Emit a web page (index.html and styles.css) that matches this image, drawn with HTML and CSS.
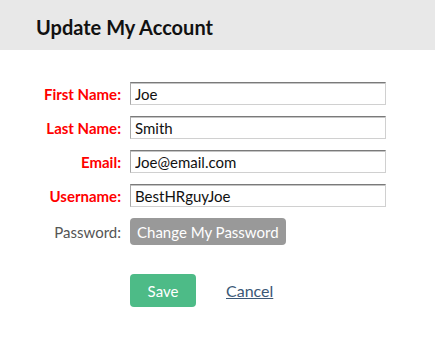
FILE: index.html
```html
<!DOCTYPE html>
<html>
<head>
<meta charset="utf-8">
<link rel="stylesheet" href="styles.css">
</head>
<body>
<header class="header"><h1 class="title">Update My Account</h1></header>
<form class="form">
  <label class="label req">First Name:</label>
  <input class="field" type="text" value="Joe">
  <label class="label req">Last Name:</label>
  <input class="field" type="text" value="Smith">
  <label class="label req">Email:</label>
  <input class="field" type="text" value="Joe@email.com">
  <label class="label req">Username:</label>
  <input class="field" type="text" value="BestHRguyJoe">
  <label class="label plain">Password:</label>
  <div class="cell"><button type="button" class="btn-gray">Change My Password</button></div>
</form>
<div class="actions">
  <button type="button" class="btn-save">Save</button>
  <a class="cancel" href="#">Cancel</a>
</div>
</body>
</html>
```
FILE: styles.css
```css
* { box-sizing: border-box; }
html, body { margin: 0; padding: 0; background: #fff; }
body { font-family: Lato, "Open Sans", sans-serif; color: #111; }
.header {
  height: 50px;
  background: #e8e8e8;
  padding-left: 36px;
  display: flex;
  align-items: center;
}
.title {
  margin: 0;
  font-size: 20px;
  font-weight: 700;
  color: #111;
  padding-top: 4px;
}
.form {
  display: grid;
  grid-template-columns: 121px 256px;
  column-gap: 9px;
  row-gap: 11px;
  padding-top: 32px;
  align-items: center;
}
.label {
  text-align: right;
  font-size: 15px;
  line-height: 18px;
}
.req { color: #ff0000; font-weight: 700; }
.plain { color: #555; font-weight: 400; }
.field {
  width: 256px;
  height: 23px;
  margin: 0;
  padding: 0 4px;
  font-family: Lato, sans-serif;
  font-size: 15px;
  color: #111;
  background: #fff;
  border: 1px solid #d0d0d0;
  border-top-color: #7a7a7a;
  border-left-color: #a8a8a8;
  box-shadow: inset 0 1px 0 #c4c4c4;
  outline: none;
}
.cell { display: flex; }
.btn-gray {
  height: 27px;
  padding: 0 7px;
  border: none;
  border-radius: 4px;
  background: #999;
  color: #fff;
  font-family: Lato, sans-serif;
  font-size: 15px;
}
.actions {
  display: flex;
  align-items: center;
  gap: 30px;
  padding-left: 130px;
  margin-top: 29px;
}
.btn-save {
  width: 66px;
  height: 33px;
  border: none;
  border-radius: 4px;
  background: #4dbb87;
  color: #fff;
  font-family: Lato, sans-serif;
  font-size: 15px;
}
.cancel {
  color: #3b5877;
  font-size: 16px;
  text-decoration: underline;
}
```
